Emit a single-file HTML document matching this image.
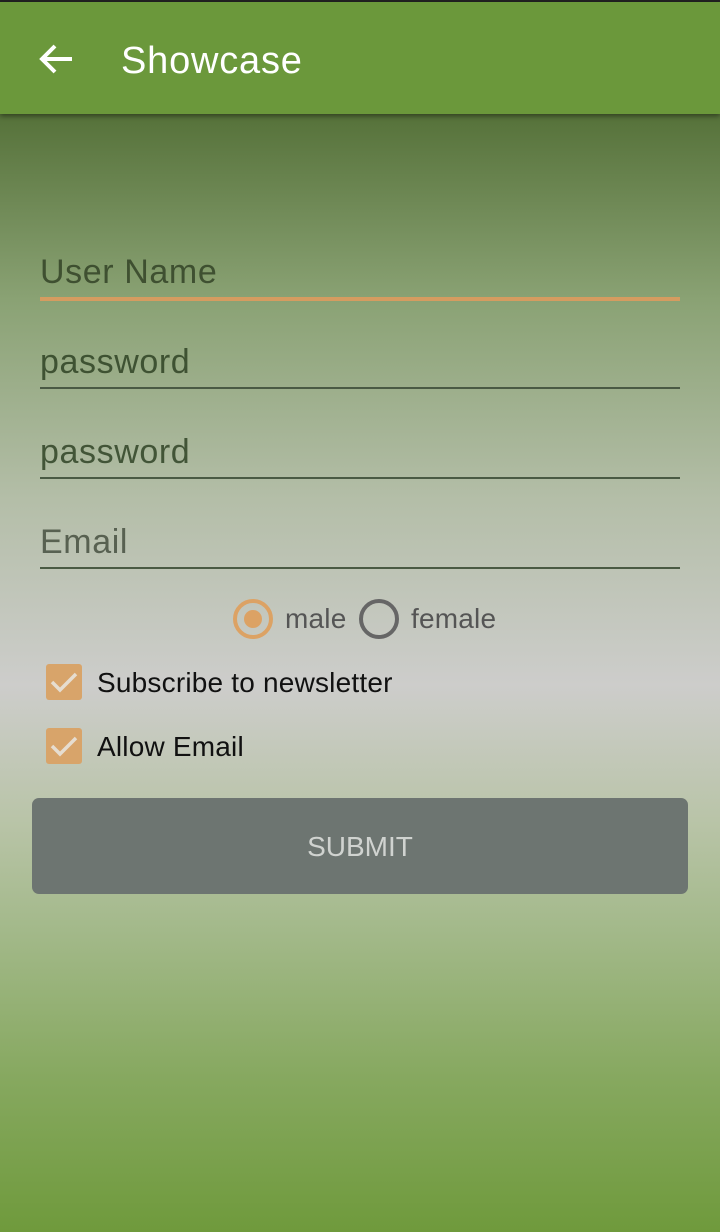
<!DOCTYPE html>
<html><head><meta charset="utf-8"><style>
*{margin:0;padding:0;box-sizing:border-box}
body{width:720px;height:1232px;position:relative;overflow:hidden;font-family:"Liberation Sans",sans-serif;
background:linear-gradient(to bottom,#56723a 0px,#56723a 115px,#8aa274 300px,#b4bea8 500px,#cdcdcb 685px,#b9c4a8 820px,#a3b98a 930px,#86a85f 1080px,#6f9a3c 1232px)}
.top{position:absolute;left:0;top:0;width:720px;height:2px;background:#222}
.bar{position:absolute;left:0;top:2px;width:720px;height:112px;background:#6b983b;box-shadow:0 2px 5px rgba(0,0,0,.45)}
.title{position:absolute;left:121px;top:37px;color:#fff;font-size:38px;line-height:44px;letter-spacing:0.8px}
.field{position:absolute;left:40px;width:640px;font-size:34px;color:rgba(40,60,30,.8);line-height:40px;letter-spacing:0.6px}
.line{position:absolute;left:40px;width:640px;height:2px;background:#4a5a44}
.rad{position:absolute;top:599px;width:40px;height:40px;border-radius:50%;border:4px solid #666}
.lbl{position:absolute;font-size:28px;color:#555;letter-spacing:0.2px}
.cb{position:absolute;left:46px;width:36px;height:36px;background:#d8a46a;border-radius:3px}
.ct{position:absolute;left:97px;font-size:28px;color:#111;letter-spacing:0.2px}
.btn{position:absolute;left:32px;top:798px;width:656px;height:96px;background:#6d7571;border-radius:7px;color:#d0d3d0;font-size:28px;text-align:center;line-height:98px}
</style></head><body>
<div class="top"></div>
<div class="bar">
<svg style="position:absolute;left:38px;top:40px" width="36" height="36" viewBox="0 0 36 36"><path d="M34 17H6M17 4L4 17l13 13" stroke="#fff" stroke-width="4" fill="none"/></svg>
<div class="title">Showcase</div>
</div>
<div class="field" style="top:252px;color:rgba(40,55,30,.75)">User Name</div>
<div class="line" style="top:297px;height:4px;background:#d59c60"></div>
<div class="field" style="top:342px">password</div>
<div class="line" style="top:387px"></div>
<div class="field" style="top:432px">password</div>
<div class="line" style="top:477px"></div>
<div class="field" style="top:522px;color:rgba(70,80,65,.85)">Email</div>
<div class="line" style="top:567px"></div>
<div class="rad" style="left:233px;border-color:#dca264"><div style="position:absolute;left:7px;top:7px;width:18px;height:18px;border-radius:50%;background:#dca264"></div></div>
<div class="lbl" style="left:285px;top:603px">male</div>
<div class="rad" style="left:359px"></div>
<div class="lbl" style="left:411px;top:603px">female</div>
<div class="cb" style="top:664px"><svg width="36" height="36"><path d="M6 18l8 8 16-16" stroke="#e6ddd0" stroke-width="3.5" fill="none"/></svg></div>
<div class="ct" style="top:667px">Subscribe to newsletter</div>
<div class="cb" style="top:728px"><svg width="36" height="36"><path d="M6 18l8 8 16-16" stroke="#e6ddd0" stroke-width="3.5" fill="none"/></svg></div>
<div class="ct" style="top:731px">Allow Email</div>
<div class="btn">SUBMIT</div>
</body></html>
